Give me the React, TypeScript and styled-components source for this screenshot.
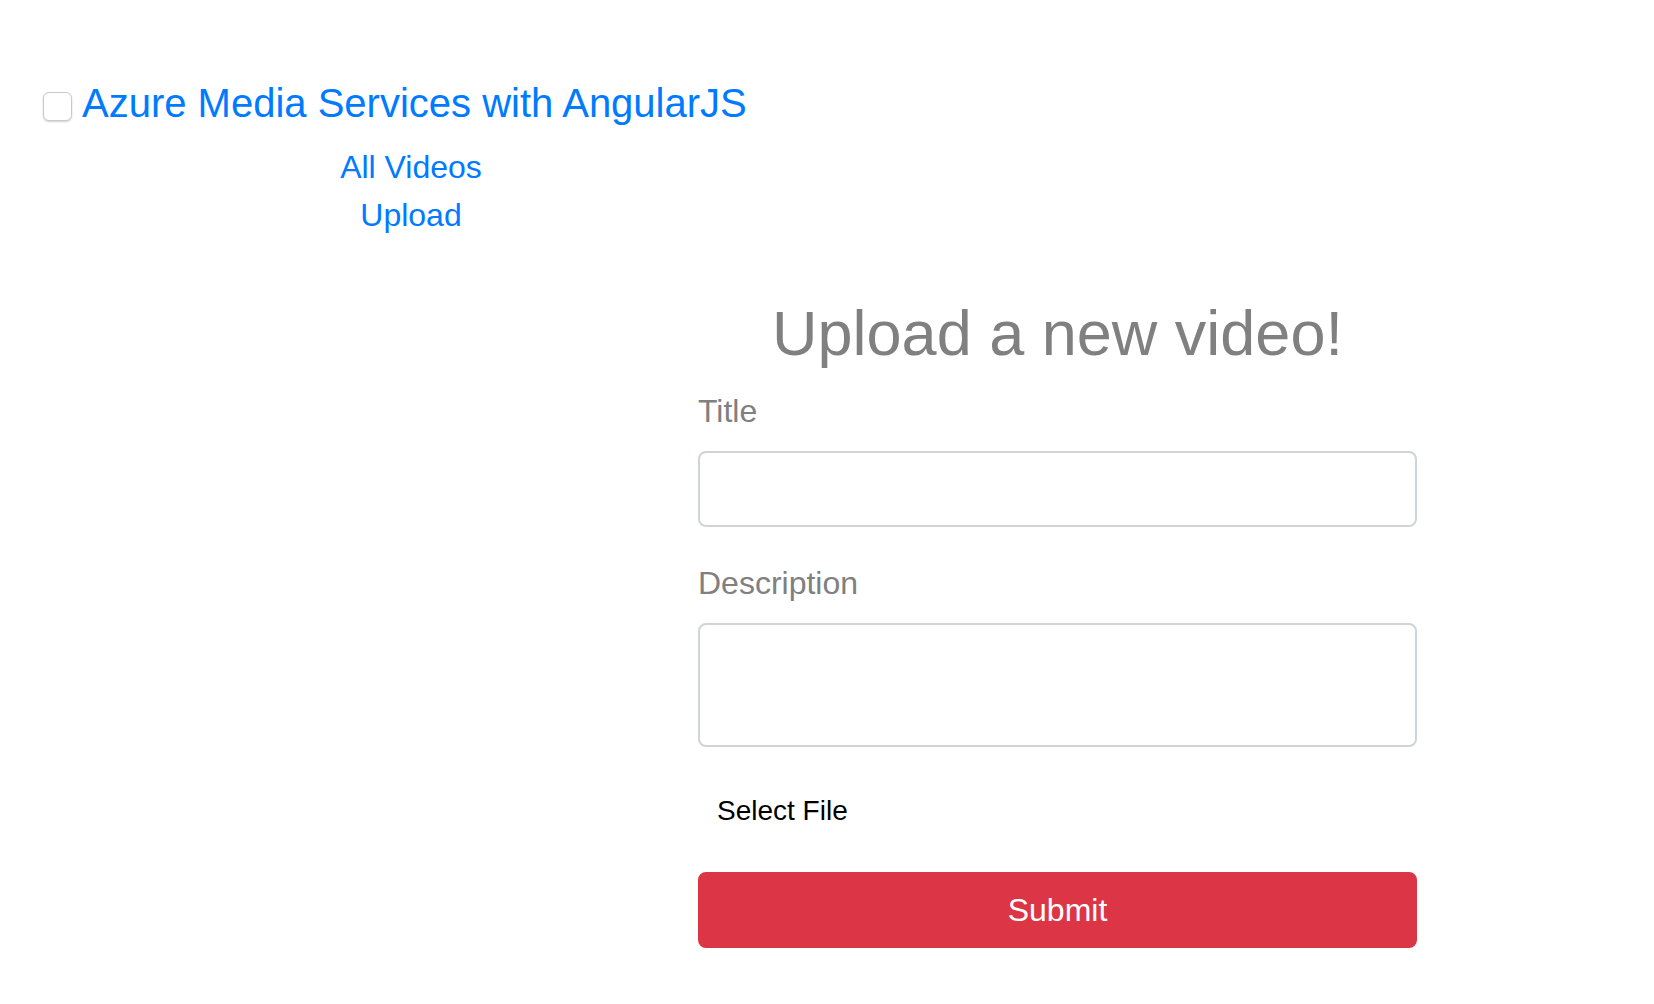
import React from "react";
import styled, { createGlobalStyle } from "styled-components";

const GlobalStyle = createGlobalStyle`
  html, body {
    margin: 0;
    padding: 0;
    background: #ffffff;
  }
  body {
    font-family: "Liberation Sans", Arial, Helvetica, sans-serif;
    color: #212529;
  }
  *, *::before, *::after {
    box-sizing: border-box;
  }
`;

const Page = styled.div`
  display: flex;
  flex-direction: column;
  padding-top: 79px;
  padding-bottom: 56px;
`;

const Header = styled.header`
  display: flex;
  align-items: flex-start;
  gap: 10px;
  padding-left: 43px;
`;

const Toggle = styled.input`
  appearance: none;
  -webkit-appearance: none;
  flex: none;
  width: 29px;
  height: 29px;
  margin: 13px 0 0 0;
  background: #ffffff;
  border: 1px solid #c9c9c9;
  border-radius: 6px;
  box-shadow: 0 1px 2px rgba(0, 0, 0, 0.18);
`;

const Brand = styled.a`
  font-size: 40px;
  line-height: 48px;
  font-weight: 500;
  color: #007bff;
  text-decoration: none;
`;

const Nav = styled.nav`
  display: flex;
  flex-direction: column;
  align-items: center;
  width: 822px;
  margin-top: 16px;
`;

const NavLink = styled.a`
  font-size: 32px;
  line-height: 48px;
  color: #007bff;
  text-decoration: none;
`;

const Form = styled.form`
  display: flex;
  flex-direction: column;
  width: 719px;
  margin: 56px 0 0 698px;
`;

const Heading = styled.h2`
  margin: 0 0 15px 0;
  font-size: 63px;
  line-height: 77px;
  font-weight: 500;
  color: #808080;
  text-align: center;
`;

const Group = styled.div<{ $last?: boolean }>`
  display: flex;
  flex-direction: column;
  margin-bottom: ${(p) => (p.$last ? "0" : "32px")};
`;

const Label = styled.label`
  font-size: 32px;
  line-height: 48px;
  color: #808080;
  margin-bottom: 16px;
`;

const TextInput = styled.input`
  width: 100%;
  height: 76px;
  padding: 12px 24px;
  font-family: inherit;
  font-size: 32px;
  color: #495057;
  background: #ffffff;
  border: 2px solid #ced4da;
  border-radius: 8px;
  outline: none;
`;

const TextArea = styled.textarea`
  width: 100%;
  height: 124px;
  padding: 12px 24px;
  font-family: inherit;
  font-size: 32px;
  color: #495057;
  background: #ffffff;
  border: 2px solid #ced4da;
  border-radius: 8px;
  outline: none;
  resize: none;
`;

const FileLabel = styled.label`
  display: block;
  padding: 11px 0 0 19px;
  margin-bottom: 40px;
  font-size: 28px;
  line-height: 42px;
  color: #000000;
`;

const HiddenFile = styled.input`
  display: none;
`;

const SubmitButton = styled.button`
  width: 100%;
  height: 76px;
  padding: 12px 24px;
  font-family: inherit;
  font-size: 32px;
  line-height: 48px;
  font-weight: 400;
  color: #ffffff;
  background: #dc3545;
  border: 2px solid #dc3545;
  border-radius: 8px;
  cursor: pointer;
`;

export default function App() {
  return (
    <>
      <GlobalStyle />
      <Page>
        <Header>
          <Toggle type="checkbox" aria-label="Toggle navigation" />
          <Brand href="#">Azure Media Services with AngularJS</Brand>
        </Header>
        <Nav>
          <NavLink href="#">All Videos</NavLink>
          <NavLink href="#">Upload</NavLink>
        </Nav>
        <Form onSubmit={(e) => e.preventDefault()}>
          <Heading>Upload a new video!</Heading>
          <Group>
            <Label htmlFor="title">Title</Label>
            <TextInput id="title" type="text" />
          </Group>
          <Group>
            <Label htmlFor="description">Description</Label>
            <TextArea id="description" />
          </Group>
          <Group $last>
            <FileLabel htmlFor="file">Select File</FileLabel>
            <HiddenFile id="file" type="file" />
          </Group>
          <SubmitButton type="submit">Submit</SubmitButton>
        </Form>
      </Page>
    </>
  );
}
